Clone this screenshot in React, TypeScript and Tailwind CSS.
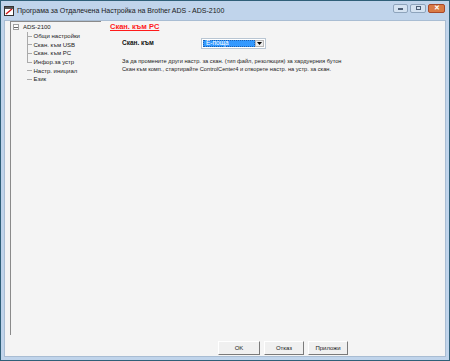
import React from "react";

const treeItems = ["Общи настройки", "Скан. към USB", "Скан. към PC", "Инфор.за устр", "Настр. инициал", "Език"];

export default function App() {
  return (
    <div className="w-[450px] h-[361px] flex flex-col bg-[#c0d4eb] border border-[#2f5f78] font-['Liberation_Sans',Arial,sans-serif] text-black overflow-hidden">
      {/* title bar */}
      <div className="h-[19px] flex items-center shrink-0">
        <svg width="10" height="10" viewBox="0 0 10 10" className="ml-[3px] mr-[3px]">
          <rect x="0.5" y="0.5" width="9" height="9" fill="#ffffff" stroke="#333" />
          <rect x="1" y="1" width="8" height="2" fill="#555" />
          <path d="M2 8 L8 3" stroke="#d01010" strokeWidth="1.3" />
        </svg>
        <span className="text-[7px] leading-none text-[#1a1a1a]">Програма за Отдалечена Настройка на Brother ADS - ADS-2100</span>
        <div className="ml-auto mr-[4px] flex items-start gap-[2px] -mt-[5px]">
          <div className="w-[15px] h-[9px] rounded-[2px] border border-[#8ea4bc] bg-[#d4e2f1] flex items-center justify-center">
            <div className="w-[5px] h-[1.5px] bg-[#4d5f76] mt-[2px]" />
          </div>
          <div className="w-[16px] h-[9px] rounded-[2px] border border-[#8ea4bc] bg-[#d4e2f1] flex items-center justify-center">
            <div className="w-[5px] h-[4px] border border-[#4d5f76] border-t-[1.5px]" />
          </div>
          <div className="w-[17px] h-[9px] rounded-[2px] border border-[#a8492a] bg-[#d97a45] flex items-center justify-center text-white text-[6.5px] leading-none font-bold">
            ✕
          </div>
        </div>
      </div>
      {/* client */}
      <div className="flex-1 mx-[3px] mb-[3px] bg-[#f4f4f4] border border-[#a9bdd3] flex flex-col">
        <div className="flex">
          {/* tree */}
          <div className="ml-[5px] w-[91px] h-[314px] border-t border-l border-[#8a8a8a] pt-[1px] shrink-0">
            <div className="h-[8.7px] flex items-center text-[6px] leading-none text-[#222]">
              <div className="ml-[2px] w-[6px] h-[6px] border border-[#a0a0a0] bg-white flex items-center justify-center">
                <div className="w-[4px] h-[1px] bg-[#666]" />
              </div>
              <span className="ml-[4px]">ADS-2100</span>
            </div>
            <div className="relative ml-[16px]">
              <div className="absolute left-0 top-0 h-[30.5px] w-0 border-l border-[#aaa]" />
              {treeItems.map((t) => (
                <div key={t} className="h-[8.7px] flex items-center text-[6px] leading-none text-[#222]">
                  <div className="w-[5px] h-0 border-t border-[#aaa]" />
                  <span className="ml-[1.5px]">{t}</span>
                </div>
              ))}
            </div>
          </div>
          {/* right panel */}
          <div className="ml-[9px] pt-[1px] flex-1">
            <div className="text-[7.5px] leading-none font-bold text-[#ff1a1a] underline mt-[1px]">Скан. към PC</div>
            <div className="flex items-center mt-[7px] ml-[12px]">
              <span className="text-[6.5px] leading-none font-bold w-[79px] text-[#111]">Скан. към</span>
              <div className="w-[65px] h-[11px] border border-[#b9c6d3] bg-white flex items-center p-[1px]">
                <div className="flex-1 h-full bg-[#3399ff] text-white text-[6.5px] leading-none flex items-center pl-[2px] border border-dotted border-[#1b5fb0]">
                  E-поща
                </div>
                <div className="w-[9px] h-full bg-[#ececec] border border-[#b8b8b8] flex items-center justify-center">
                  <svg width="5" height="3" viewBox="0 0 5 3"><path d="M0 0 H5 L2.5 3 Z" fill="#000" /></svg>
                </div>
              </div>
            </div>
            <div className="ml-[12px] mt-[8px] text-[5.7px] leading-[8.3px] text-[#222]">
              <div>За да промените други настр. за скан. (тип файл, резолюция) за хардуерния бутон</div>
              <div>Скан към комп., стартирайте ControlCenter4 и отворете настр. на устр. за скан.</div>
            </div>
          </div>
        </div>
        <div className="flex justify-end pr-[97px] mt-[6px] gap-[4px]">
          {["OK", "Отказ", "Приложи"].map((b, i) => (
            <div
              key={b}
              className={`h-[14px] ${i === 0 ? "w-[42px]" : "w-[40px]"} bg-[#f0f0f0] border border-t-white border-l-white border-r-[#7a7a7a] border-b-[#7a7a7a] flex items-center justify-center text-[6px] leading-none text-[#222]`}
            >
              {b}
            </div>
          ))}
        </div>
      </div>
    </div>
  );
}
